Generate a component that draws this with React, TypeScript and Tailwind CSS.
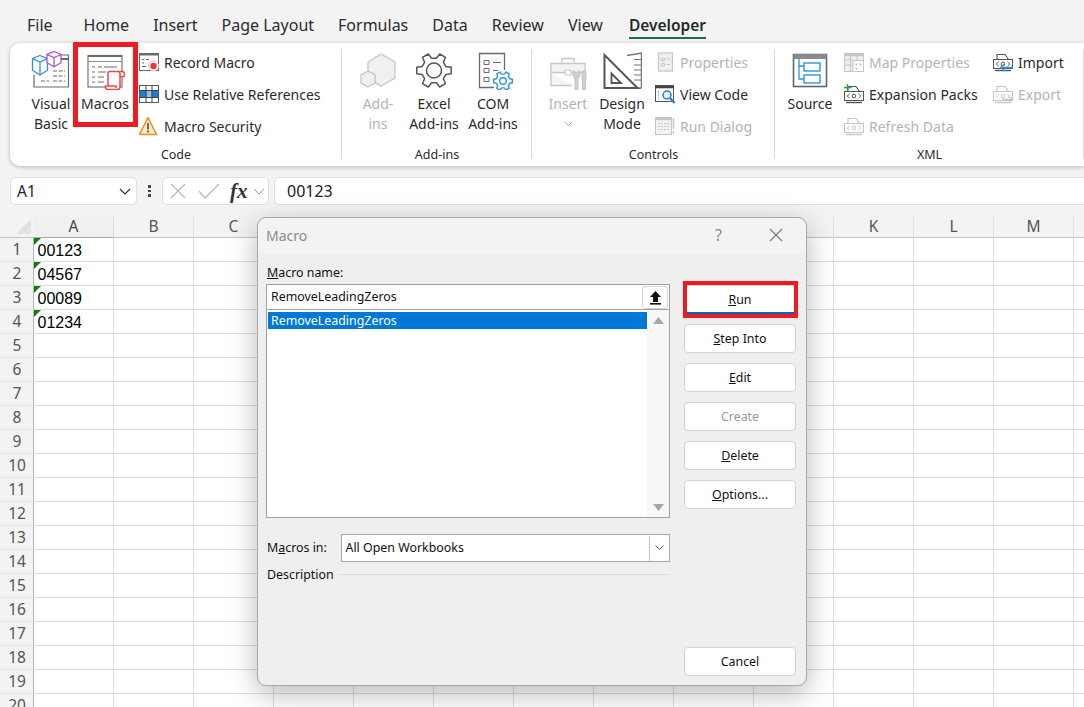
import type { ReactNode } from "react";

const uiFont = "font-['Noto_Sans','Open_Sans',sans-serif]";

const tabs = ["Home", "Insert", "Page Layout", "Formulas", "Data", "Review", "View"];
const columns = ["A", "B", "C", "D", "E", "F", "G", "H", "I", "J", "K", "L", "M", ""];
const rows = Array.from({ length: 20 }, (_, i) => i + 1);
const cellValues = ["00123", "04567", "00089", "01234"];

const off = "#c6c6c6";
const ink = "#6a6a6a";

const Svg = ({ size, children }: { size: number; children: ReactNode }) => (
  <svg width={size} height={size} viewBox={`0 0 ${size} ${size}`} fill="none" className="shrink-0">
    {children}
  </svg>
);

// six wide teeth, same outline for the big gear and the small blue one
const gearPath = (cx: number, cy: number, R: number, r: number) => {
  const pt = (rad: number, deg: number) => {
    const a = (deg * Math.PI) / 180;
    return `${(cx + rad * Math.cos(a)).toFixed(1)} ${(cy + rad * Math.sin(a)).toFixed(1)}`;
  };
  const parts: string[] = [];
  for (let i = 0; i < 6; i++) {
    const a = i * 60;
    parts.push(pt(r, a - 19), pt(R, a - 11), pt(R, a + 11), pt(r, a + 19));
  }
  return `M${parts.join("L")}Z`;
};

/* ---------- large ribbon icons (40px) ---------- */
const VisualBasicIcon = () => (
  <Svg size={40}>
    <path d="M30 5h7.500v32H3V25" stroke={ink} strokeWidth="1.200" />
    <path d="M30 9h7" stroke={ink} strokeWidth="2" />
    <path d="M10 31h8M22 31h12M22 26h12M22 21h12" stroke={ink} strokeDasharray="4 1.500" />
    <path d="M9 5.500l7.500 3.200v11.500L9 25 1.500 20.200V8.700z" fill="#fff" stroke="#2f93d8" strokeWidth="1.300" />
    <path d="M1.500 8.700L9 12l7.500-3.300M9 12v13" stroke="#2f93d8" strokeWidth="1.300" />
    <path d="M23 1.500l7 3v8.200l-7 4-7-4V4.500z" fill="#fff" stroke="#a855c8" strokeWidth="1.300" />
    <path d="M16 4.500l7 3 7-3M23 7.500v9" stroke="#a855c8" strokeWidth="1.300" />
  </Svg>
);

const MacrosIcon = () => (
  <Svg size={40}>
    <rect x="3" y="5.500" width="34" height="31.500" stroke={ink} strokeWidth="1.100" />
    <path d="M3 6h34" stroke={ink} strokeWidth="1.800" />
    <path d="M3 11.500h34" stroke="#8a8a8a" />
    <path d="M7 17h3M13 17h4M19 17h13M7 22h3M13 22h8M7 27h3M13 27h6M7 32h3M13 32h6" stroke={ink} />
    <path
      d="M23 36V23.500a2 2 0 0 1 2-2H37a2.500 2.500 0 0 1 2.500 2.500v2.500H35V37a2.500 2.500 0 0 1-2.500 2.500H23a2.500 2.500 0 0 1-2.500-2.500v-1H31v2"
      fill="#fff"
      stroke="#ec4649"
      strokeWidth="1.500"
    />
    <path d="M35 26v-2.500a2 2 0 0 0-2-2" stroke="#ec4649" strokeWidth="1.500" />
  </Svg>
);

const AddinsIcon = () => (
  <Svg size={40}>
    <path d="M23 4l14 8v16l-14 8-6-3.400V25l-7-4v-9z" fill="#f0f0f0" stroke={off} strokeWidth="1.300" />
    <path d="M10 21l7 4v8l-7 4-7-4v-8z" fill="#f0f0f0" stroke={off} strokeWidth="1.300" />
  </Svg>
);

const ExcelAddinsIcon = () => (
  <Svg size={40}>
    <path d={gearPath(20, 20.500, 17.500, 12.500)} stroke="#555" strokeWidth="1.500" strokeLinejoin="round" />
    <circle cx="20" cy="20.500" r="7.500" stroke="#555" strokeWidth="1.500" />
  </Svg>
);

const ComIcon = () => (
  <Svg size={40}>
    <path d="M31.500 20V3.500h-25v34H21" stroke={ink} strokeWidth="1.300" />
    <path d="M11 10.500h5v4h-5zM11 18.500h5v4h-5zM11 27.500h5v4h-5z" stroke={ink} />
    <path d="M20 12.500h8M20 20.500h5" stroke={ink} />
    <path d={gearPath(30, 31, 9.500, 7)} fill="#fff" stroke="#2f93d8" strokeWidth="1.400" strokeLinejoin="round" />
    <circle cx="30" cy="31" r="3.300" stroke="#2f93d8" strokeWidth="1.400" />
  </Svg>
);

const InsertIcon = () => (
  <Svg size={40}>
    <path d="M14 13V8.500h12V13" stroke={off} strokeWidth="1.300" />
    <path d="M3 13.500h34v9H3z" fill="#f3f3f3" stroke={off} strokeWidth="1.300" />
    <path d="M3 22.500v13h21" fill="#f3f3f3" stroke={off} strokeWidth="1.300" />
    <path d="M17 20h6v5h-6z" fill="#fff" stroke={off} />
    <path d="M25 21v5l2 2v12h3V28l2-2v-5l-1.500 0v3h-4v-3z" fill="#cfcfcf" stroke={off} />
    <path d="M34 21h4v9h-.5v10h-3V30H34z" fill="#cfcfcf" stroke={off} />
  </Svg>
);

const DesignModeIcon = () => (
  <Svg size={40}>
    <path d="M25 5.500L39.500 3v35H32" stroke="#777" strokeWidth="1.500" />
    <path d="M32 9.500h7M32 15h7M32 20h7M32 25h7M32 30h7" stroke="#777" strokeWidth="1.200" />
    <path d="M2.500 5l33 33H2.500z" fill="#fff" stroke="#555" strokeWidth="2" />
    <path d="M9.500 23.500l9.500 9.500H9.500z" stroke="#555" strokeWidth="1.800" />
  </Svg>
);

const SourceIcon = () => (
  <Svg size={40}>
    <rect x="3.500" y="4.500" width="33" height="32" stroke="#666" strokeWidth="1.600" />
    <rect x="3.500" y="4" width="33" height="5" fill="#8a8a8a" />
    <path d="M9 9v20h5M9 16h5" stroke="#2f93d8" strokeWidth="1.300" />
    <rect x="14" y="13" width="16" height="8" fill="#fff" stroke="#2f93d8" strokeWidth="1.400" />
    <rect x="14" y="25" width="16" height="8" fill="#fff" stroke="#2f93d8" strokeWidth="1.400" />
  </Svg>
);

/* ---------- small ribbon icons (20px) ---------- */
const RecordMacroIcon = () => (
  <Svg size={20}>
    <rect x=".5" y="1.500" width="19" height="17" fill="#fff" stroke={ink} />
    <path d="M0 2.500h20" stroke={ink} strokeWidth="2" />
    <path d="M3 7.500h2M7 7.500h3M3 11h2M3 14.500h4" stroke={ink} />
    <circle cx="14.500" cy="14" r="5" fill="#fff" stroke="#c9c9c9" />
    <circle cx="14.500" cy="14" r="3.200" fill="#e8363a" />
  </Svg>
);

const RelativeRefsIcon = () => (
  <Svg size={20}>
    <rect x=".5" y="1.500" width="19" height="17" fill="#fff" stroke="#555" />
    <rect x="1" y="6.500" width="18" height="7" fill="#1f7fd0" />
    <rect x="7.500" y="7" width="5" height="6" fill="#8cc2ec" />
    <path d="M0 6.500h20M0 13.500h20M7 1v17M13 1v17" stroke="#444" />
  </Svg>
);

const WarningIcon = () => (
  <Svg size={20}>
    <path d="M9 1.500L17.500 18.500H.5z" fill="#fbe9c4" stroke="#e8912d" strokeWidth="1.600" strokeLinejoin="round" />
    <path d="M9 7v6.500" stroke="#555" strokeWidth="1.700" />
    <path d="M9 14.500v2" stroke="#555" strokeWidth="1.700" />
  </Svg>
);

const PropertiesIcon = () => (
  <Svg size={20}>
    <rect x="3.500" y="1" width="14" height="18" fill="#f0f0f0" stroke={off} strokeWidth="1.200" />
    <path d="M6.500 6h3v2.500h-3zM6.500 11.500h3V14h-3zM12 7h3M12 12.500h3" stroke={off} />
  </Svg>
);

const ViewCodeIcon = () => (
  <Svg size={20}>
    <rect x=".5" y="1.500" width="18" height="16" fill="#fff" stroke="#555" />
    <path d="M0 3h19" stroke="#444" strokeWidth="2.600" />
    <path d="M3 8h2M3 11h2M3 14h2" stroke="#666" strokeDasharray="1 1" />
    <circle cx="12" cy="11" r="4" fill="#e6f2fb" stroke="#1f7fc8" strokeWidth="1.500" />
    <path d="M15 14l4.500 5" stroke="#1f7fc8" strokeWidth="2" />
  </Svg>
);

const RunDialogIcon = () => (
  <Svg size={20}>
    <rect x=".5" y="1.500" width="16" height="17" fill="#f3f3f3" stroke={off} />
    <path d="M0 3h17" stroke={off} strokeWidth="2.400" />
    <path d="M3 7.500h11M3 10.500h11M3 13.500h11" stroke={off} strokeDasharray="2 1" />
    <path d="M18.500 2v11M18.500 15v3" stroke={off} strokeWidth="1.500" />
  </Svg>
);

const MapPropertiesIcon = () => (
  <Svg size={20}>
    <rect x=".5" y="1.500" width="19" height="18" fill="#f0f0f0" stroke={off} />
    <path d="M0 3h20" stroke={off} strokeWidth="2.400" />
    <path d="M0 8h9M0 13h9M6.500 4v15M13 4v4" stroke={off} />
    <rect x="9" y="8.500" width="10.500" height="11" fill="#fff" stroke={off} />
    <path d="M11.500 11.500h2v2h-2zM15.500 11.500h2v2h-2zM11.500 15.500h2v2h-2z" fill={off} />
  </Svg>
);

const XmlDoc = ({ color }: { color: string }) => (
  <>
    <path d="M4 8V2.500h8l3.500 5" stroke={color} strokeWidth="1.100" />
    <rect x=".5" y="7.500" width="19" height="9" fill="#fff" stroke={color} />
    <path d="M2 18.500h16" stroke={color} strokeWidth="1.400" />
    <path d="M5.500 9.800L3.200 12l2.300 2.200M14.500 9.800l2.300 2.200-2.300 2.200" stroke={color} />
    <circle cx="10" cy="12" r="1.800" stroke={color} />
  </>
);

const ExpansionIcon = () => (
  <Svg size={20}>
    <XmlDoc color="#555" />
    <path d="M3.500 0v7.500M0 3.500h7.500" stroke="#2f9e44" strokeWidth="1.400" />
  </Svg>
);

const RefreshIcon = () => (
  <Svg size={20}>
    <XmlDoc color={off} />
  </Svg>
);

const ImportIcon = () => (
  <Svg size={20}>
    <XmlDoc color="#555" />
    <path d="M20 15.500H8M11.500 12L8 15.500l3.500 3.500" stroke="#2f93d8" strokeWidth="1.500" />
  </Svg>
);

const ExportIcon = () => (
  <Svg size={20}>
    <XmlDoc color={off} />
    <path d="M9 15.500h10.500M16 12l3.500 3.500L16 19" stroke={off} strokeWidth="1.300" />
  </Svg>
);

/* ---------- ribbon parts ---------- */
const LargeButton = ({
  width,
  icon,
  lines,
  disabled,
  chevron,
}: {
  width: string;
  icon: ReactNode;
  lines: string[];
  disabled?: boolean;
  chevron?: boolean;
}) => (
  <div className={`flex shrink-0 flex-col items-center pt-[7px] ${width}`}>
    <div className="flex h-[40px] items-center justify-center">{icon}</div>
    <div className={`mt-[4px] text-center text-[14px] leading-[20px] ${disabled ? "text-[#b4b4b4]" : "text-[#2b2b2b]"}`}>
      {lines.map((line) => (
        <div key={line} className="whitespace-nowrap">
          {line}
        </div>
      ))}
      {chevron && (
        <div className="flex h-[20px] items-center justify-center">
          <svg width="9" height="6" viewBox="0 0 9 6" fill="none">
            <path d="M1 1l3.500 3.500L8 1" stroke="#a8a8a8" />
          </svg>
        </div>
      )}
    </div>
  </div>
);

const SmallButton = ({ icon, label, disabled }: { icon: ReactNode; label: string; disabled?: boolean }) => (
  <div className="flex h-[32px] items-center gap-[5px]">
    {icon}
    <span className={`whitespace-nowrap text-[14px] ${disabled ? "text-[#b4b4b4]" : "text-[#2b2b2b]"}`}>{label}</span>
  </div>
);

const Group = ({ width, label, children }: { width: string; label: string; children: ReactNode }) => (
  <div className={`relative flex h-full shrink-0 flex-col ${width}`}>
    <div className="flex h-[99px]">{children}</div>
    <div className="flex h-[24px] items-center justify-center pt-[2px] text-[12.500px] text-[#2b2b2b]">{label}</div>
    <div className="absolute right-0 top-[6px] h-[110px] w-px bg-[#d8d8d8]" />
  </div>
);

/* ---------- dialog parts ---------- */
const DialogButton = ({ children, disabled }: { children: ReactNode; disabled?: boolean }) => (
  <div
    className={`flex h-[29px] w-[112px] items-center justify-center rounded-[4px] border border-[#d4d4d4] bg-white pt-[1px] text-[12.400px] ${
      disabled ? "text-[#9a9a9a]" : "text-[#111]"
    }`}
  >
    {children}
  </div>
);

export default function App() {
  return (
    <div className={`relative h-[707px] w-[1084px] overflow-hidden bg-[#f3f3f3] ${uiFont}`}>
      {/* Tabs */}
      <div className="flex h-[43px] items-start pl-[27px] pt-[14px] text-[16px] leading-[22px] text-[#2b2b2b]">
        <span className="mr-[31px]">File</span>
        <div className="flex gap-[24px]">
          {tabs.map((tab) => (
            <span key={tab}>{tab}</span>
          ))}
          <span className="relative ml-[2px] text-[15.500px] font-semibold text-[#1f2b25]">
            Developer
            <span className="absolute bottom-[-3px] left-0 right-0 h-[2px] bg-[#1f6e43]" />
          </span>
        </div>
      </div>

      {/* Ribbon */}
      <div className="relative ml-[10px] flex h-[123px] rounded-l-[10px] bg-white shadow-[0_1px_4px_rgba(0,0,0,0.25)]">
        <Group width="w-[332px]" label="Code">
          <div className="w-[11px]" />
          <LargeButton width="w-[60px]" icon={<VisualBasicIcon />} lines={["Visual", "Basic"]} />
          <LargeButton width="w-[48px]" icon={<MacrosIcon />} lines={["Macros"]} />
          <div className="ml-[10px] pt-[3px]">
            <SmallButton icon={<RecordMacroIcon />} label="Record Macro" />
            <SmallButton icon={<RelativeRefsIcon />} label="Use Relative References" />
            <SmallButton icon={<WarningIcon />} label="Macro Security" />
          </div>
          <div className="absolute left-[63px] top-[-1px] h-[85px] w-[65px] border-[5px] border-[#ed1c24]" />
        </Group>
        <Group width="w-[190px]" label="Add-ins">
          <div className="w-[12px]" />
          <LargeButton width="w-[48px]" icon={<AddinsIcon />} lines={["Add-", "ins"]} disabled />
          <LargeButton width="w-[64px]" icon={<ExcelAddinsIcon />} lines={["Excel", "Add-ins"]} />
          <LargeButton width="w-[54px]" icon={<ComIcon />} lines={["COM", "Add-ins"]} />
        </Group>
        <Group width="w-[243px]" label="Controls">
          <div className="w-[12px]" />
          <LargeButton width="w-[48px]" icon={<InsertIcon />} lines={["Insert"]} disabled chevron />
          <LargeButton width="w-[60px]" icon={<DesignModeIcon />} lines={["Design", "Mode"]} />
          <div className="ml-[3px] pt-[3px]">
            <SmallButton icon={<PropertiesIcon />} label="Properties" disabled />
            <SmallButton icon={<ViewCodeIcon />} label="View Code" />
            <SmallButton icon={<RunDialogIcon />} label="Run Dialog" disabled />
          </div>
        </Group>
        <Group width="w-[309px]" label="XML">
          <div className="w-[5px]" />
          <LargeButton width="w-[60px]" icon={<SourceIcon />} lines={["Source"]} />
          <div className="ml-[4px] w-[149px] pt-[3px]">
            <SmallButton icon={<MapPropertiesIcon />} label="Map Properties" disabled />
            <SmallButton icon={<ExpansionIcon />} label="Expansion Packs" />
            <SmallButton icon={<RefreshIcon />} label="Refresh Data" disabled />
          </div>
          <div className="pt-[3px]">
            <SmallButton icon={<ImportIcon />} label="Import" />
            <SmallButton icon={<ExportIcon />} label="Export" disabled />
          </div>
        </Group>
      </div>

      {/* Formula bar */}
      <div className="mt-[11px] flex h-[28px] items-stretch pl-[10px]">
        <div className="flex w-[127px] items-center justify-between rounded-[5px] border border-[#e0e0e0] bg-white pl-[6px] pr-[5px] pt-[1px] text-[15.500px] text-[#222]">
          A1
          <svg width="12" height="7" viewBox="0 0 12 7" fill="none">
            <path d="M1 1l5 5 5-5" stroke="#333" strokeWidth="1.200" />
          </svg>
        </div>
        <div className="flex w-[25px] flex-col items-center justify-center gap-[2px]">
          <span className="h-[2.500px] w-[2.500px] bg-[#444]" />
          <span className="h-[2.500px] w-[2.500px] bg-[#444]" />
          <span className="h-[2.500px] w-[2.500px] bg-[#444]" />
        </div>
        <div className="flex w-[107px] items-center rounded-[5px] border border-[#e0e0e0] bg-white pl-[7px]">
          <svg width="16" height="16" viewBox="0 0 16 16" fill="none">
            <path d="M1 1l14 14M15 1L1 15" stroke="#b8b8b8" strokeWidth="1.200" />
          </svg>
          <svg width="22" height="16" viewBox="0 0 22 16" fill="none" className="ml-[12px]">
            <path d="M1 8l6 7L21 1" stroke="#b8b8b8" strokeWidth="1.200" />
          </svg>
          <span className="ml-[10px] font-['Liberation_Serif',serif] text-[21px] font-bold italic leading-none text-[#333]">fx</span>
          <svg width="12" height="7" viewBox="0 0 12 7" fill="none" className="ml-[5px]">
            <path d="M1 1l5 5 5-5" stroke="#999" />
          </svg>
        </div>
        <div className="ml-[5px] flex flex-1 items-center rounded-l-[5px] border border-r-0 border-[#e0e0e0] bg-white pl-[12px] text-[16px] text-[#222]">
          00123
        </div>
      </div>

      {/* Sheet */}
      <div className="mt-[12px]">
        <div className="flex h-[21px]">
          <div className="relative w-[34px] shrink-0 border-b border-[#c4c4c4]">
            <div className="absolute bottom-[3px] right-[3px] h-0 w-0 border-b-[15px] border-l-[15px] border-b-[#e2e2e2] border-l-transparent" />
          </div>
          {columns.map((col) => (
            <div
              key={col}
              className={`flex w-[80px] shrink-0 items-center justify-center border-b border-r text-[15.500px] ${
                col === "A" ? "border-b-[#a8a8a8] border-r-[#dcdcdc] bg-[#f0f0f0] text-[#444]" : "border-b-[#c4c4c4] border-r-[#e2e2e2] text-[#555]"
              }`}
            >
              {col}
            </div>
          ))}
        </div>
        {rows.map((row) => (
          <div key={row} className="flex h-[24px]">
            <div className="flex w-[34px] shrink-0 items-center justify-center border-b border-r border-b-[#e4e4e4] border-r-[#b4b4b4] pl-[1px] text-[15.500px] text-[#555]">
              {row}
            </div>
            {columns.map((col) => (
              <div key={col} className="relative w-[80px] shrink-0 border-b border-r border-[#dcdcdc] bg-white">
                {col === "A" && cellValues[row - 1] && (
                  <>
                    <span className="absolute left-0 top-0 h-0 w-0 border-r-[7px] border-t-[7px] border-r-transparent border-t-[#107c10]" />
                    <span className="flex h-full items-center pl-[3.500px] pt-[2px] font-['Liberation_Sans',sans-serif] text-[16px] text-black">
                      {cellValues[row - 1]}
                    </span>
                  </>
                )}
              </div>
            ))}
          </div>
        ))}
      </div>

      {/* Macro dialog */}
      <div className="absolute left-[257px] top-[217px] flex h-[469px] w-[550px] flex-col rounded-[9px] border border-[#a8a8a8] bg-[#efefef] shadow-[0_8px_28px_rgba(0,0,0,0.28)]">
        <div className="flex h-[36px] shrink-0 items-center rounded-t-[9px] bg-[#f3f3f3] pb-[2px] pl-[8px] pr-[23px]">
          <span className="flex-1 text-[14px] text-[#8c8c8c]">Macro</span>
          <span className="mr-[47px] text-[16px] text-[#8c8c8c]">?</span>
          <svg width="14" height="14" viewBox="0 0 14 14" fill="none">
            <path d="M1 1l12 12M13 1L1 13" stroke="#7a7a7a" strokeWidth="1.100" />
          </svg>
        </div>
        <div className="flex flex-1 pb-[9px] pl-[8px]">
          <div className="w-[404px] shrink-0 text-[12.400px] text-[#111]">
            <div className="flex h-[30px] items-end pb-[1px] pl-[1px]">
              <span>
                <span className="underline">M</span>acro name:
              </span>
            </div>
            <div className="flex h-[26px] items-center justify-between border border-[#a0a0a0] bg-white pl-[4px] pr-[1px]">
              <span className="pt-[1px]">RemoveLeadingZeros</span>
              <div className="flex h-[23px] w-[26px] items-center justify-center rounded-[3px] border border-[#d4d4d4]">
                <svg width="13" height="15" viewBox="0 0 13 15">
                  <path d="M6.500 1L12 7H9v5H4V7H1z" fill="#111" />
                  <rect x="1" y="13" width="11" height="1.600" fill="#111" />
                </svg>
              </div>
            </div>
            <div className="flex h-[208px] border border-t-0 border-[#a0a0a0] bg-white">
              <div className="flex-1 pl-[1px] pt-[2px]">
                <div className="flex h-[17px] items-center bg-[#0078d7] pl-[3px] pt-[2px] text-white">RemoveLeadingZeros</div>
              </div>
              <div className="flex w-[22px] flex-col items-center justify-between bg-[#f7f7f7] pb-[6px] pt-[7px]">
                <svg width="11" height="7" viewBox="0 0 11 7">
                  <path d="M5.500 0L11 7H0z" fill="#a6a6a6" />
                </svg>
                <svg width="11" height="7" viewBox="0 0 11 7">
                  <path d="M5.500 7L11 0H0z" fill="#a6a6a6" />
                </svg>
              </div>
            </div>
            <div className="mt-[16px] flex h-[28px] items-center pl-[1px]">
              <span className="w-[74px]">
                M<span className="underline">a</span>cros in:
              </span>
              <div className="flex h-full flex-1 items-center justify-between border border-[#a8a8a8] bg-white pl-[3.500px]">
                All Open Workbooks
                <div className="flex h-[25px] w-[20px] items-center justify-center border-l border-[#c4c4c4]">
                  <svg width="9" height="6" viewBox="0 0 9 6" fill="none">
                    <path d="M.5.500l4 4 4-4" stroke="#555" />
                  </svg>
                </div>
              </div>
            </div>
            <div className="mt-[4px] flex items-center gap-[4px] pl-[1px]">
              <span>Description</span>
              <div className="mb-[2px] h-px flex-1 bg-[#dcdcdc]" />
            </div>
          </div>
          <div className="ml-[14px] flex flex-col gap-[10px] pt-[31px]">
            <div className="relative">
              <DialogButton>
                <span>
                  <span className="underline">R</span>un
                </span>
              </DialogButton>
              <div className="absolute inset-x-0 bottom-0 h-[2px] bg-[#0067c0]" />
              <div className="absolute bottom-[-4px] left-[-1px] right-[-2px] top-[-4px] border-[4.500px] border-[#ed1c24]" />
            </div>
            <DialogButton>
              <span>
                <span className="underline">S</span>tep Into
              </span>
            </DialogButton>
            <DialogButton>
              <span>
                <span className="underline">E</span>dit
              </span>
            </DialogButton>
            <DialogButton disabled>Create</DialogButton>
            <DialogButton>
              <span>
                <span className="underline">D</span>elete
              </span>
            </DialogButton>
            <DialogButton>
              <span>
                <span className="underline">O</span>ptions...
              </span>
            </DialogButton>
            <div className="mt-auto">
              <DialogButton>Cancel</DialogButton>
            </div>
          </div>
        </div>
      </div>
    </div>
  );
}
